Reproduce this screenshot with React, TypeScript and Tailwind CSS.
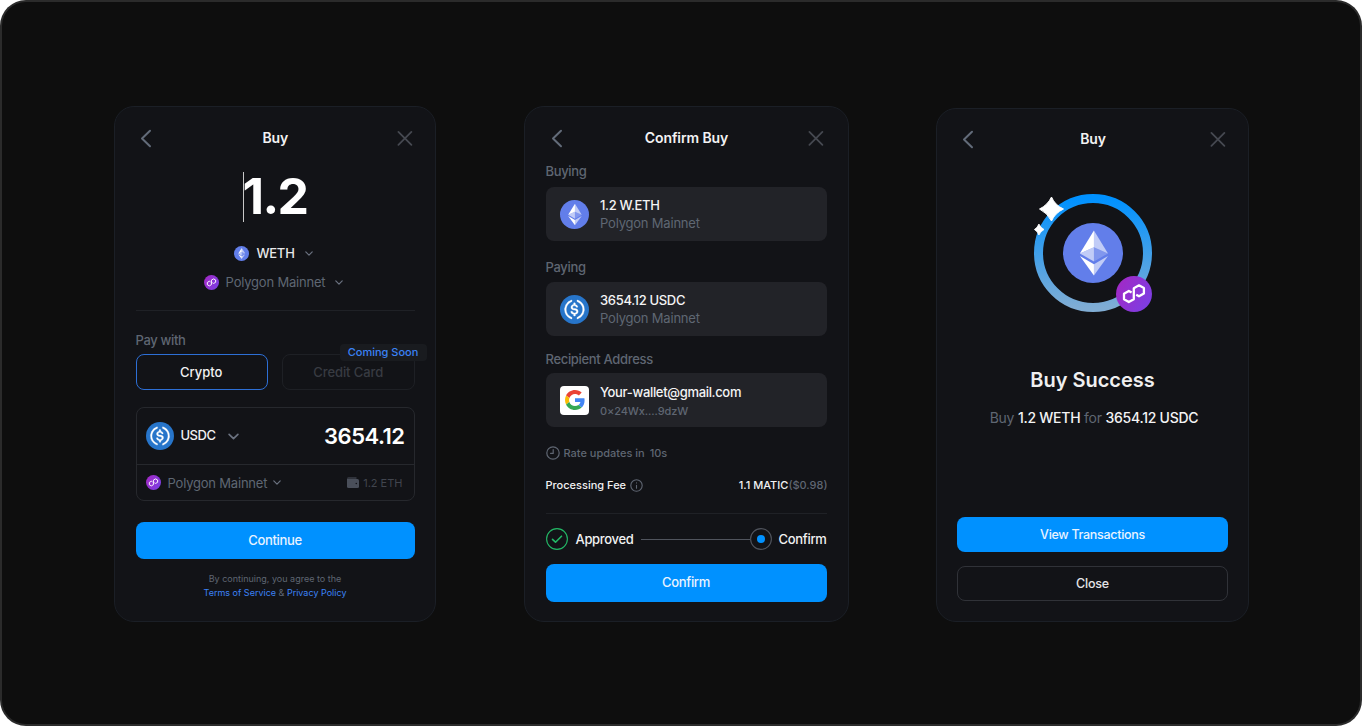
import React from "react";

let uid = 0;

function Eth({ className }: { className: string }) {
  return (
    <svg viewBox="0 0 32 32" className={className}>
      <circle cx="16" cy="16" r="16" fill="#627EEA" />
      <g fill="#fff">
        <path fillOpacity=".602" d="M16.498 4v8.87l7.497 3.35z" />
        <path d="M16.498 4L9 16.22l7.498-3.35z" />
        <path fillOpacity=".602" d="M16.498 21.968v6.027L24 17.616z" />
        <path d="M16.498 27.995v-6.028L9 17.616z" />
        <path fillOpacity=".2" d="M16.498 20.573l7.497-4.353-7.497-3.348z" />
        <path fillOpacity=".602" d="M9 16.22l7.498 4.353v-7.701z" />
      </g>
    </svg>
  );
}

function Usdc({ className }: { className: string }) {
  return (
    <svg viewBox="0 0 32 32" className={className}>
      <circle cx="16" cy="16" r="16" fill="#2775CA" />
      <g fill="#fff" stroke="#fff" strokeWidth=".35">
        <path d="M20.022 18.124c0-2.124-1.28-2.852-3.84-3.156-1.828-.243-2.193-.728-2.193-1.578 0-.85.61-1.396 1.828-1.396 1.097 0 1.707.364 2.011 1.275a.458.458 0 00.427.303h.975a.416.416 0 00.427-.425v-.06a3.04 3.04 0 00-2.743-2.489V9.142c0-.243-.183-.425-.487-.486h-.915c-.243 0-.426.182-.487.486v1.396c-1.829.242-2.986 1.456-2.986 2.974 0 2.002 1.218 2.791 3.778 3.095 1.707.303 2.255.668 2.255 1.639 0 .97-.853 1.638-2.011 1.638-1.585 0-2.133-.667-2.316-1.578-.06-.242-.244-.364-.427-.364h-1.036a.416.416 0 00-.426.425v.06c.243 1.518 1.219 2.61 3.23 2.914v1.457c0 .242.183.425.487.485h.915c.243 0 .426-.182.487-.485V21.34c1.829-.303 3.047-1.578 3.047-3.217z" />
        <path d="M12.892 24.497c-4.754-1.7-7.192-6.98-5.424-11.653.914-2.55 2.925-4.491 5.424-5.402.244-.121.365-.303.365-.607v-.85c0-.242-.121-.424-.365-.485-.061 0-.183 0-.244.06a10.895 10.895 0 00-7.13 13.717c1.096 3.4 3.717 6.01 7.13 7.102.244.121.488 0 .548-.243.061-.06.061-.122.061-.243v-.85c0-.182-.182-.424-.365-.546zm6.46-18.936c-.244-.122-.488 0-.548.242-.061.061-.061.122-.061.243v.85c0 .243.182.485.365.607 4.754 1.7 7.192 6.98 5.424 11.653-.914 2.55-2.925 4.491-5.424 5.402-.244.121-.365.303-.365.607v.85c0 .242.121.424.365.485.061 0 .183 0 .244-.06a10.895 10.895 0 007.13-13.717c-1.096-3.46-3.778-6.07-7.13-7.162z" />
      </g>
    </svg>
  );
}

function Polygon({ className }: { className: string }) {
  const id = React.useMemo(() => `poly${uid++}`, []);
  return (
    <svg viewBox="0 0 36 36" className={className}>
      <defs>
        <linearGradient id={id} x1="0" y1="8" x2="36" y2="28" gradientUnits="userSpaceOnUse">
          <stop stopColor="#A229C5" />
          <stop offset="1" stopColor="#7B3FE4" />
        </linearGradient>
      </defs>
      <circle cx="18" cy="18" r="18" fill={`url(#${id})`} />
      <path
        d="M15.6 16.6L12.8 15L8 17.8V23.3L12.8 26.1L17.8 23.2V12.2L23 9.3L27.9 12V17.5L23 20.3L20.2 18.7"
        fill="none"
        stroke="#fff"
        strokeWidth="2.3"
        strokeLinejoin="round"
      />
    </svg>
  );
}

function Google({ className }: { className: string }) {
  return (
    <svg viewBox="0 0 48 48" className={className}>
      <path fill="#EA4335" d="M24 9.5c3.54 0 6.71 1.22 9.21 3.6l6.85-6.85C35.9 2.38 30.47 0 24 0 14.62 0 6.51 5.38 2.56 13.22l7.98 6.19C12.43 13.72 17.74 9.5 24 9.5z" />
      <path fill="#4285F4" d="M46.98 24.55c0-1.57-.15-3.09-.38-4.55H24v9.02h12.94c-.58 2.96-2.26 5.48-4.78 7.18l7.73 6c4.51-4.18 7.09-10.36 7.09-17.65z" />
      <path fill="#FBBC05" d="M10.53 28.59c-.48-1.45-.76-2.99-.76-4.59s.27-3.14.76-4.59l-7.98-6.19C.92 16.46 0 20.12 0 24c0 3.88.92 7.54 2.56 10.78l7.97-6.19z" />
      <path fill="#34A853" d="M24 48c6.48 0 11.93-2.13 15.89-5.81l-7.73-6c-2.15 1.45-4.92 2.3-8.16 2.3-6.26 0-11.57-4.22-13.47-9.91l-7.98 6.19C6.51 42.62 14.62 48 24 48z" />
    </svg>
  );
}

function Down({ className }: { className: string }) {
  return (
    <svg viewBox="0 0 10 6" className={className} fill="none" stroke="currentColor" strokeWidth="1.5" strokeLinecap="round" strokeLinejoin="round">
      <path d="M1 1l4 4 4-4" />
    </svg>
  );
}

function Header({ title }: { title: string }) {
  return (
    <div className="flex h-5 items-center justify-between">
      <svg viewBox="0 0 20 20" className="size-5 text-[#626b79]" fill="none" stroke="currentColor" strokeWidth="2" strokeLinecap="round" strokeLinejoin="round">
        <path d="M14 2.800L6 10.500l8 7.700" />
      </svg>
      <div className="text-sm leading-5 font-semibold tracking-[-0.1px] text-[#f2f2f3]">{title}</div>
      <svg viewBox="0 0 20 20" className="size-5 text-[#454850]" fill="none" stroke="currentColor" strokeWidth="1.800" strokeLinecap="round">
        <path d="M3.400 3.900l13 13M16.400 3.900L3.400 16.900" />
      </svg>
    </div>
  );
}

function Asset({ icon, title, children }: { icon: React.ReactNode; title: string; children: React.ReactNode }) {
  return (
    <div className="flex h-[54px] items-center gap-[11px] rounded-lg bg-[#222328] pl-[14.5px]">
      {icon}
      <div>
        <div className="text-[13px] leading-[18px] font-medium tracking-[-0.33px] text-[#f4f4f5]">{title}</div>
        {children}
      </div>
    </div>
  );
}

const card = "flex flex-col rounded-[20px] border border-[#1b1f26] bg-[#121317]";
const label = "text-[13px] leading-[18px] font-medium tracking-[-0.33px] text-[#5f6672]";
const network = "text-[13px] leading-[18px] tracking-[-0.2px] text-[#5f6773]";

function BuyCard() {
  return (
    <section className={`${card} ml-[114px] mt-[106px] h-[516px] w-[322px] px-[20.5px]`}>
      <div className="mt-[21px] pl-[0.5px]">
        <Header title="Buy" />
      </div>
      <div className="mt-6 flex h-[50px] items-center justify-center">
        <div className="h-[50px] w-px bg-[#c8c8c8]" />
        <div className="-mt-[3px] -ml-px text-[50px] leading-[50px] font-bold tracking-[-1.6px] text-white">1.2</div>
      </div>
      <div className="mt-[22px] flex h-[18px] items-center justify-center pr-[3px]">
        <Eth className="size-[15px]" />
        <span className="ml-[7px] text-[13px] leading-[18px] font-medium tracking-[-0.2px] text-[#e8e8ea]">WETH</span>
        <Down className="ml-[10px] h-[5px] w-2 text-[#6b7280]" />
      </div>
      <div className="mt-[11px] flex h-[18px] items-center justify-center pr-[3px]">
        <Polygon className="size-[15px]" />
        <span className={`${network} ml-[7px]`}>Polygon Mainnet</span>
        <Down className="ml-[10px] h-[5px] w-2 text-[#6b7280]" />
      </div>
      <div className="mt-[19px] h-px bg-[#1f2126]" />
      <div className={`${label} mt-5`}>Pay with</div>
      <div className="mt-[5px] flex justify-between">
        <div className="flex h-9 w-[132.5px] items-center justify-center rounded-lg border border-[#2d6fd6] pr-px pt-px text-[13px] font-medium text-[#f1f1f2]">Crypto</div>
        <div className="relative flex h-9 w-[132.5px] items-center justify-center rounded-lg border border-[#1e2025] pt-px text-[13px] font-medium tracking-[-0.1px] text-[#383b42]">
          Credit Card
          <div className="absolute -top-[11px] -right-[13px] flex h-[17px] w-[87px] items-center justify-center rounded bg-[#191b1f] text-[11px] font-medium tracking-normal text-[#3b82f6]">Coming Soon</div>
        </div>
      </div>
      <div className="mt-[17px] h-[94px] rounded-lg border border-[#26282d]">
        <div className="flex h-[57px] items-center border-b border-[#26282d] pr-[9px] pl-[9.5px]">
          <Usdc className="size-7" />
          <span className="ml-[6.5px] text-[13px] font-medium tracking-[-0.5px] text-[#f1f1f2]">USDC</span>
          <Down className="ml-[13px] h-[7px] w-[11px] text-[#6b7280]" />
          <span className="ml-auto text-[22px] font-semibold tracking-[-0.5px] text-white">3654.12</span>
        </div>
        <div className="flex h-[35px] items-center pr-[11px] pl-[9.5px]">
          <Polygon className="size-[15px]" />
          <span className={`${network} ml-[6.5px]`}>Polygon Mainnet</span>
          <Down className="ml-[6px] h-[5px] w-2 text-[#6b7280]" />
          <svg viewBox="0 0 12 11" className="ml-auto h-[11px] w-3">
            <path d="M1.5 0H9.5V2H0V1.5A1.5 1.5 0 011.5 0z" fill="#30333b" />
            <path d="M0 2H10.5A1.5 1.5 0 0112 3.5V9.5A1.5 1.5 0 0110.5 11H1.5A1.5 1.5 0 010 9.5z" fill="#4a4f5a" />
            <circle cx="9.3" cy="6.5" r=".8" fill="#121317" />
          </svg>
          <span className="ml-1 pt-0.5 text-[11px] text-[#41454e]">1.2 ETH</span>
        </div>
      </div>
      <div className="mt-[21px] flex h-[37px] items-center justify-center rounded-lg bg-[#0091ff] text-[13px] font-medium tracking-[-0.33px] text-[#e8f3ff]">Continue</div>
      <div className="mt-[13px] text-center text-[9px] leading-[14px] text-[#5f6672]">
        By continuing, you agree to the
        <br />
        <span className="text-[#3b82f6]">Terms of Service</span> &amp; <span className="text-[#3b82f6]">Privacy Policy</span>
      </div>
    </section>
  );
}

function ConfirmCard() {
  return (
    <section className={`${card} ml-[88px] mt-[106px] h-[516px] w-[325px] pr-[21.5px] pl-[20.5px]`}>
      <div className="mt-[21px] pl-[1px]">
        <Header title="Confirm Buy" />
      </div>
      <div className={`${label} mt-3.5`}>Buying</div>
      <div className="mt-[7px]">
        <Asset icon={<Eth className="size-[29px]" />} title="1.2 W.ETH">
          <div className={network}>Polygon Mainnet</div>
        </Asset>
      </div>
      <div className={`${label} mt-[17px]`}>Paying</div>
      <div className="mt-[6px]">
        <Asset icon={<Usdc className="size-[29px]" />} title="3654.12 USDC">
          <div className={network}>Polygon Mainnet</div>
        </Asset>
      </div>
      <div className={`${label} mt-[14px]`}>Recipient Address</div>
      <div className="mt-[5px]">
        <Asset
          icon={
            <div className="flex size-[29px] items-center justify-center rounded bg-white">
              <Google className="size-5" />
            </div>
          }
          title="Your-wallet@gmail.com"
        >
          <div className="mb-[-2px] pt-0.5 text-[11px] leading-4 font-medium tracking-[-0.1px] text-[#5f6672]">0×24Wx....9dzW</div>
        </Asset>
      </div>
      <div className="mt-[18px] flex h-4 items-center text-[11px] font-medium text-[#5f6672]">
        <svg viewBox="0 0 14 14" className="size-3.5" fill="none" stroke="currentColor" strokeWidth="1.2" strokeLinecap="round" strokeLinejoin="round">
          <circle cx="7" cy="7" r="6.2" />
          <path d="M7.2 3.5V7.4H4.6" />
        </svg>
        <span className="ml-1">Rate updates in</span>
        <span className="ml-[5px]">10s</span>
      </div>
      <div className="-mr-px mt-4 flex h-4 items-center text-[11px] font-medium text-[#f1f1f2]">
        <span className="pt-px">Processing Fee</span>
        <svg viewBox="0 0 13 13" className="ml-[4px] size-[13px] text-[#5f6672]" fill="none" stroke="currentColor" strokeWidth="1.1" strokeLinecap="round">
          <circle cx="6.5" cy="6.5" r="5.7" />
          <path d="M6.5 6.2V9.3M6.5 3.900V4" />
        </svg>
        <span className="ml-auto pt-px">1.1 MATIC</span>
        <span className="pt-px text-[#5f6672]">($0.98)</span>
      </div>
      <div className="mt-5 h-px bg-[#1f2126]" />
      <div className="mt-3.5 flex h-[22px] items-center text-[13px] font-medium tracking-[-0.33px] text-[#f1f1f2]">
        <svg viewBox="0 0 22 22" className="ml-[0.5px] size-[22px]" fill="none" stroke="#23b866" strokeLinecap="round" strokeLinejoin="round">
          <circle cx="11" cy="11" r="10.4" strokeWidth="1.1" />
          <path d="M6.5 11.3l3 2.900 6-6" strokeWidth="1.6" />
        </svg>
        <span className="ml-[7.5px] pt-px">Approved</span>
        <span className="ml-2 h-px flex-1 bg-[#50545d]" />
        <svg viewBox="0 0 22 22" className="size-[22px]">
          <circle cx="11" cy="11" r="10.4" fill="none" stroke="#50545d" strokeWidth="1.1" />
          <circle cx="11" cy="11" r="4" fill="#0091ff" />
        </svg>
        <span className="ml-[7px] pt-px">Confirm</span>
      </div>
      <div className="mt-3.5 flex h-[38px] items-center justify-center rounded-lg bg-[#0091ff] text-[13px] font-medium tracking-[-0.33px] text-[#e8f3ff]">Confirm</div>
    </section>
  );
}

function SuccessCard() {
  return (
    <section className={`${card} ml-[87px] mt-[108px] h-[514px] w-[313px] px-5`}>
      <div className="mt-5 pl-px">
        <Header title="Buy" />
      </div>
      <div className="mt-11 flex justify-center">
        <div className="relative flex size-[120px] items-center justify-center">
          <svg viewBox="0 0 120 120" className="absolute inset-0 size-[120px]">
            <defs>
              <linearGradient id="ring" x1="0" y1="0" x2="0" y2="1">
                <stop stopColor="#0091ff" />
                <stop offset="1" stopColor="#80add4" />
              </linearGradient>
            </defs>
            <circle cx="60" cy="60" r="54.5" fill="none" stroke="url(#ring)" strokeWidth="9" />
            <g fill="#fff" stroke="#fff" strokeLinejoin="round">
              <path strokeWidth="1" d="M18.5 4Q22 12.2 30.5 16Q22 20 18.5 28Q14.500 20 6.500 16Q14.500 12.2 18.5 4z" />
              <path strokeWidth=".8" d="M5.9 31Q7.8 35 11 36.5Q7.8 38.2 5.9 42Q4.3 38.2 1.4 36.5Q4.3 35 5.9 31z" />
            </g>
          </svg>
          <Eth className="relative left-[0.5px] size-[60px]" />
          <Polygon className="absolute right-px bottom-px size-9" />
        </div>
      </div>
      <div className="mt-[53px] text-center text-xl leading-7 font-semibold text-[#efeff0]">Buy Success</div>
      <div className="mt-[14px] pl-[3px] text-center text-[14px] leading-5 tracking-[-0.25px] text-[#5f6672]">
        Buy <span className="font-medium text-[#f4f4f5]">1.2 WETH</span> for <span className="font-medium text-[#f4f4f5]">3654.12 USDC</span>
      </div>
      <div className="mt-[89px] flex h-[35px] items-center justify-center rounded-lg bg-[#0091ff] pt-0.5 text-[12.5px] font-medium tracking-[-0.3px] text-[#e8f3ff]">View Transactions</div>
      <div className="mt-3.5 flex h-[35px] items-center justify-center rounded-lg border border-[#303238] pt-0.5 text-[12.5px] font-medium tracking-[-0.2px] text-[#e4e4e6]">Close</div>
    </section>
  );
}

export default function App() {
  return (
    <div className="h-[726px] w-[1362px] bg-white">
      <main className="h-[726px] w-[1362px] overflow-hidden rounded-[26px] bg-[#2b2b2b] p-0.5 font-['Inter',sans-serif] whitespace-nowrap">
        <div className="h-[722px] w-[1358px] overflow-hidden rounded-3xl bg-[#0e0e0e]">
          <div className="-mt-0.5 -ml-0.5 flex items-start">
            <BuyCard />
            <ConfirmCard />
            <SuccessCard />
          </div>
        </div>
      </main>
    </div>
  );
}
